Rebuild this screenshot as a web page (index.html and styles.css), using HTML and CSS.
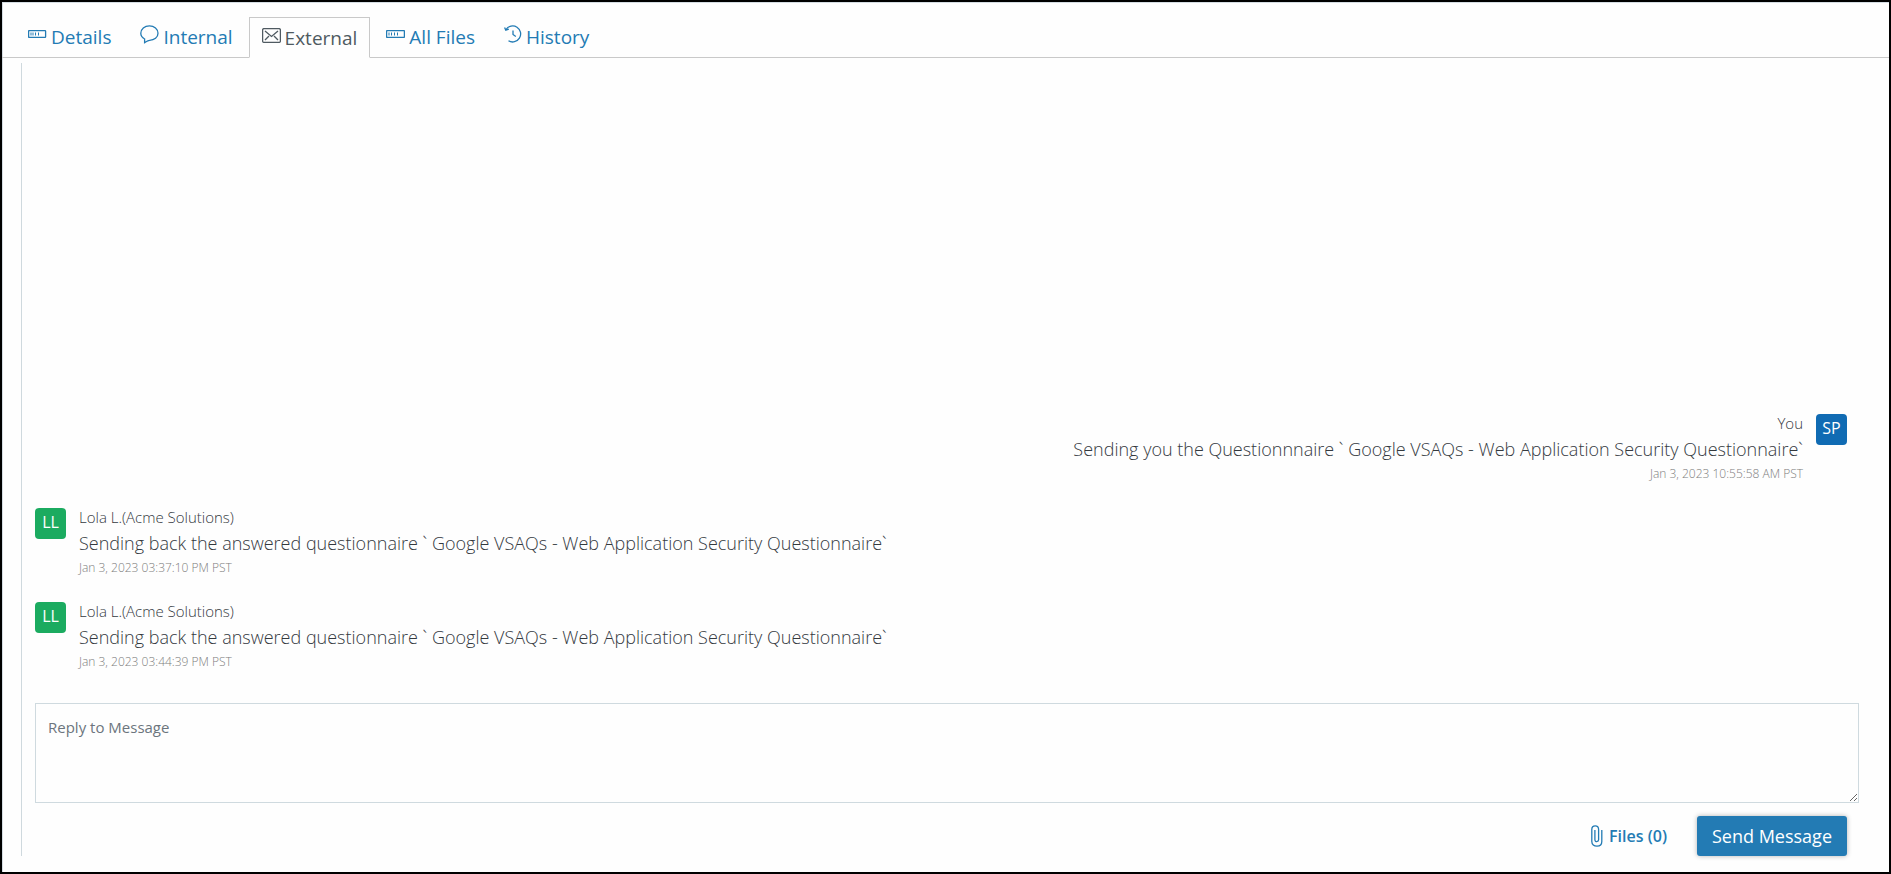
FILE: index.html
```html
<!DOCTYPE html>
<html lang="en">
<head>
    <meta charset="UTF-8">
    <meta name="viewport" content="width=device-width, initial-scale=1.0">
    <title>External Messages</title>
    <link rel="stylesheet" href="styles.css">
</head>
<body>
    <div class="page">
        <nav class="tabs">
            <a class="tab" href="#details">
                <svg class="icon" width="19" height="8" viewBox="0 0 19 8"><rect x="0.6" y="0.6" width="17" height="6.8" rx="0.6"/><path d="M3 2.500v3M5 2.500v3M7.500 2.500v3M10.500 2.500v3" stroke-width="1"/></svg>
                Details
            </a>
            <a class="tab" href="#internal">
                <svg class="icon" width="19" height="19" viewBox="0 0 19 19"><path d="M4.6 17.6V14C2.2 12.7 .8 10.6 .8 8.3C.8 4 4.6 .8 9.4 .8S18 4 18 8.2S14.300 15.300 9.600 15.300C7.500 15.300 6.200 16.600 4.600 17.600Z"/></svg>
                Internal
            </a>
            <a class="tab active" href="#external">
                <svg class="icon" width="19" height="15" viewBox="0 0 19 15"><rect x="0.6" y="0.6" width="17.8" height="13.8" rx="1.5"/><path d="M3 3L9.500 8.500L16 3M3 12L7 8M16 12L12 8"/></svg>
                External
            </a>
            <a class="tab" href="#files">
                <svg class="icon" width="19" height="8" viewBox="0 0 19 8"><rect x="0.6" y="0.6" width="17.8" height="6.8" rx="0.6"/><path d="M3 2.500v3M5.500 2.500v3M8.500 2.500v3M11.500 2.500v3" stroke-width="1"/></svg>
                All Files
            </a>
            <a class="tab" href="#history">
                <svg class="icon" width="18" height="18" viewBox="0 0 18 18"><path d="M2 4.500A8 8 0 1 1 4.500 15.800M.6 2.400L1.800 5.200L4.800 4.200M9 5.500V9.500L11.800 11.500"/></svg>
                History
            </a>
        </nav>

        <main class="panel">
            <div class="messages">
                <div class="message mine">
                    <div class="avatar blue">SP</div>
                    <div class="content">
                        <div class="name">You</div>
                        <div class="text">Sending you the Questionnnaire ` Google VSAQs - Web Application Security Questionnaire`</div>
                        <div class="time">Jan 3, 2023 10:55:58 AM PST</div>
                    </div>
                </div>
                <div class="message">
                    <div class="avatar green">LL</div>
                    <div class="content">
                        <div class="name">Lola L.(Acme Solutions)</div>
                        <div class="text">Sending back the answered questionnaire ` Google VSAQs - Web Application Security Questionnaire`</div>
                        <div class="time">Jan 3, 2023 03:37:10 PM PST</div>
                    </div>
                </div>
                <div class="message">
                    <div class="avatar green">LL</div>
                    <div class="content">
                        <div class="name">Lola L.(Acme Solutions)</div>
                        <div class="text">Sending back the answered questionnaire ` Google VSAQs - Web Application Security Questionnaire`</div>
                        <div class="time">Jan 3, 2023 03:44:39 PM PST</div>
                    </div>
                </div>
            </div>

            <form class="reply">
                <textarea class="reply-box" aria-label="Reply to Message" placeholder="Reply to Message"></textarea>
                <div class="actions">
                    <button class="files" type="button">
                        <svg class="icon" width="12" height="22" viewBox="0 0 12 22"><path d="M10.800 5V16.500C10.800 19.500 9 21.200 6 21.200S.8 19.500 .8 16.500V4.500C.8 2.200 2 .8 4.200 .8S7.600 2.200 7.600 4.500V14.800C7.600 17.200 3.900 17.200 3.900 14.800V5"/></svg>
                        Files (0)
                    </button>
                    <button class="send" type="button">Send Message</button>
                </div>
            </form>
        </main>
    </div>
</body>
</html>
```
FILE: styles.css
```css
* {
    box-sizing: border-box;
}
body {
    margin: 0;
    font-family: "Open Sans", sans-serif;
    color: #34393e;
    background-color: #fefefe;
}
.page {
    display: flex;
    flex-direction: column;
    min-height: 100vh;
    border: 2px solid #000;
    padding-bottom: 16px;
    box-shadow: inset 1px 1px 0 #d5dde3;
}

/* tabs */
.tabs {
    display: flex;
    gap: 3px;
    margin-top: 15px;
    padding: 0 13px;
    border-bottom: 1px solid #c9c9c9;
}
.tab {
    display: flex;
    align-items: center;
    gap: 4px;
    height: 41px;
    margin-bottom: -1px;
    padding: 0 12px 2px;
    border: 1px solid transparent;
    font-size: 19px;
    color: #237bb4;
    text-decoration: none;
}
.tab.active {
    padding-bottom: 0;
    color: #4f5a61;
    background-color: #fefefe;
    border-color: #c9c9c9;
    border-bottom-color: #fefefe;
}
.icon {
    flex: none;
    fill: none;
    stroke: currentColor;
    stroke-width: 1.3;
}
.tab .icon {
    margin-bottom: 5px;
}

/* messages */
.panel {
    display: flex;
    flex-direction: column;
    flex: 1;
    margin: 5px 30px 0 19px;
    padding-left: 13px;
    border-left: 1px solid #cfd9de;
}
.messages {
    display: flex;
    flex-direction: column;
    justify-content: flex-end;
    flex: 1;
    gap: 26px;
    padding: 0 12px 33px 0;
}
.message {
    display: flex;
    gap: 13px;
}
.message.mine {
    flex-direction: row-reverse;
    text-align: right;
}
.avatar {
    width: 31px;
    height: 31px;
    border-radius: 4px;
    font-size: 16px;
    line-height: 28px;
    text-align: center;
    color: #fff;
}
.blue {
    background-color: #106bb3;
}
.green {
    background-color: #1bab60;
}
.name {
    font-size: 15px;
    font-weight: 300;
    line-height: 18px;
}
.text {
    font-size: 18px;
    font-weight: 300;
    line-height: 34px;
}
.time {
    font-size: 12px;
    font-weight: 300;
    line-height: 16px;
    color: #7d7d7d;
}

/* reply form */
.reply-box {
    display: block;
    width: 100%;
    height: 100px;
    padding: 12px;
    border: 1px solid #cfdadf;
    font-family: inherit;
    font-size: 15px;
    line-height: 22px;
    background-color: #fefefe;
    resize: vertical;
}
.reply-box::placeholder {
    color: #6c757d;
}
.actions {
    display: flex;
    justify-content: flex-end;
    gap: 30px;
    padding: 13px 12px 0 0;
}
.files,
.send {
    display: flex;
    align-items: center;
    height: 40px;
    padding: 0;
    border: none;
    font-family: inherit;
    font-weight: 600;
    cursor: pointer;
}
.files {
    gap: 6px;
    font-size: 16px;
    color: #237bb4;
    background: none;
}
.send {
    padding: 0 15px;
    border-radius: 3px;
    font-size: 18px;
    font-weight: 500;
    color: #fff;
    background-color: #237bb4;
    box-shadow: 0 0 5px rgba(0, 0, 0, 0.3);
}
```
